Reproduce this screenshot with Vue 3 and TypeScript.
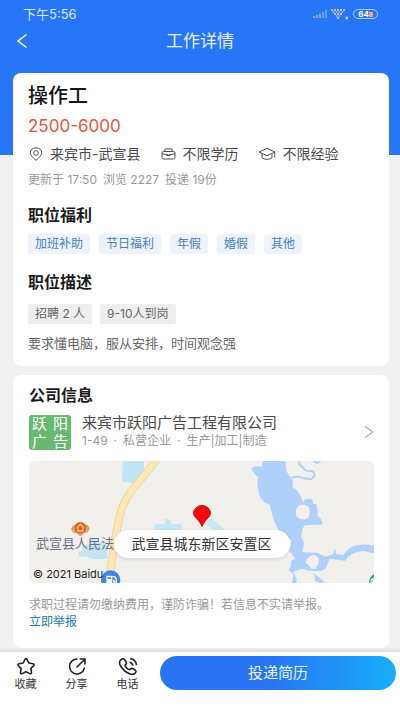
<script setup lang="ts">
interface Action {
  label: string
  paths: string[]
}

const benefits: string[] = ['加班补助', '节日福利', '年假', '婚假', '其他']
const requirements: string[] = ['招聘 2 人', '9-10人到岗']
const logoChars: string[] = ['跃', '阳', '广', '告']
const wifiRows: number[][] = [[1, 4, 7, 10, 13], [2.5, 5.5, 8.5, 11.5], [4, 7, 10], [5.5, 8.5], [7]]

const actions: Action[] = [
  {
    label: '收藏',
    paths: [
      'M8.9 2.6Q10 .7 11.1 2.6L12.8 6L16.9 6.7Q19 7.1 17.6 8.7L14.9 11.4L15.5 15.3Q15.7 17.4 13.8 16.6L10 14.8L6.2 16.6Q4.3 17.4 4.5 15.3L5.1 11.4L2.4 8.7Q1 7.1 3.1 6.7L7.2 6Z',
    ],
  },
  {
    label: '分享',
    paths: ['M10.5 2A7.5 7.5 0 1 0 17.5 10.5', 'M9.5 10.5L17.8 2.2', 'M12.6 2H18V7.4'],
  },
  {
    label: '电话',
    paths: [
      'M3 2.7Q5 .8 6.7 2.8L8.2 5Q9 6.5 7.5 7.8Q6.8 8.6 7.4 9.5Q8.5 11.3 10.5 12.4Q11.4 12.9 12.2 12.1Q13.4 10.8 15 11.7L17.2 13.2Q18.8 14.5 17.2 16.2Q15 18.3 11.5 16.8Q4.8 13.8 1.9 7.6Q.8 4.6 3 2.7Z',
      'M11.6 5.2Q14.4 5.8 14.8 8.7',
      'M12.2 1.5Q17.8 2.5 18.6 8.2',
    ],
  },
]
</script>

<template>
  <div class="page">
    <div class="status">
      <span>下午5:56</span>
      <div class="status-icons">
        <svg class="signal" viewBox="0 0 14 8" aria-hidden="true">
          <path d="M0 6h2v2H0zM3 5h2v3H3zM6 3.5h2V8H6z" fill="#8fa6b4" />
          <path d="M9 2h2v6H9zM12 0h2v8h-2z" fill="#6e9df0" />
        </svg>
        <svg class="wifi" viewBox="0 0 18 11" aria-hidden="true">
          <template v-for="(row, r) in wifiRows" :key="r">
            <circle v-for="x in row" :key="x" :cx="x" :cy="1 + r * 2" r="1" :fill="r % 2 ? '#d39bd0' : '#d5e6ff'" />
          </template>
          <circle cx="15.8" cy="9" r="1.4" fill="#b7dcff" />
        </svg>
        <span class="battery">64<i class="bolt"></i></span>
      </div>
    </div>

    <header class="header">
      <button class="back" type="button" aria-label="返回">
        <svg viewBox="0 0 12 16" aria-hidden="true"><path d="M10.5 1.5L2 8l8.500 6.500" /></svg>
      </button>
      <h1>工作详情</h1>
    </header>

    <main class="content">
      <section class="card job">
        <h2 class="job-title">操作工</h2>
        <p class="salary">2500-6000</p>
        <ul class="meta">
          <li>
            <svg viewBox="0 0 16 16" aria-hidden="true">
              <path d="M8 14.300C4.500 11.500 2.300 9.200 2.300 6.700C2.300 3.700 4.900 1.800 8 1.800S13.700 3.700 13.700 6.700C13.700 9.200 11.500 11.500 8 14.300Z" />
              <circle cx="8" cy="7" r="2.300" />
            </svg>
            来宾市-武宣县
          </li>
          <li>
            <svg viewBox="0 0 16 16" aria-hidden="true">
              <path d="M4.800 5.500V4Q4.800 2.800 6 2.800H11Q12.200 2.800 12.200 4V5.500M3.500 5.500H13.500Q15 5.500 15 7V11.500Q15 13 13.500 13H3.500Q2 13 2 11.500V7Q2 5.500 3.500 5.500ZM2 7.800Q8.500 10 15 7.800M6.500 9.500H10.500" />
            </svg>
            不限学历
          </li>
          <li>
            <svg class="cap" viewBox="0 0 18 16" aria-hidden="true">
              <path d="M1 6L9 2.300L17 6L9 9.700ZM4 7.500V11.800Q9 15 14 11.800V7.500M16.700 6.300V11.500" />
            </svg>
            不限经验
          </li>
        </ul>
        <p class="updated">更新于 17:50&ensp;浏览 2227&ensp;投递 19份</p>

        <h3 class="welfare-title">职位福利</h3>
        <ul class="tags benefits">
          <li v-for="item in benefits" :key="item">{{ item }}</li>
        </ul>

        <h3 class="desc-title">职位描述</h3>
        <ul class="tags requirements">
          <li v-for="item in requirements" :key="item">{{ item }}</li>
        </ul>
        <p class="desc">要求懂电脑，服从安排，时间观念强</p>
      </section>

      <section class="card company">
        <h3>公司信息</h3>
        <a class="company-row" href="#company">
          <span class="logo"><span v-for="c in logoChars" :key="c">{{ c }}</span></span>
          <span class="company-text">
            <span class="company-name">来宾市跃阳广告工程有限公司</span>
            <span class="company-sub">1-49&ensp;·&ensp;私营企业&ensp;·&ensp;生产|加工|制造</span>
          </span>
          <svg class="chevron" viewBox="0 0 10 14" aria-hidden="true"><path d="M1 1.500L9 7L1 12.500" /></svg>
        </a>

        <div class="map">
          <svg class="map-art" viewBox="0 0 345 122" preserveAspectRatio="xMidYMid slice" aria-hidden="true">
            <rect width="345" height="122" fill="#f1f0ed" />
            <g transform="translate(-9 -6) scale(.3333)">
              <path d="M308 15H372V42L345 85L306 80Z" fill="#bfe4f4" />
              <path d="M404 208L432 206L436 192L452 194L455 208L484 207L486 222L460 232H404Z" fill="#c3e7f3" />
              <path d="M176 290L188 288L186 270L210 268L208 255L228 250L232 262L262 260V312H220L195 304L176 306Z" fill="#c3e5f3" />
              <path d="M550 205L575 190L615 225L600 235Z" fill="#c9e8f1" />
              <path d="M418 0C385 55 320 110 304 165C296 195 284 255 276 315L266 400" fill="none" stroke="#ead6a0" stroke-width="24" />
              <path d="M418 0C385 55 320 110 304 165C296 195 284 255 276 315L266 400" fill="none" stroke="#fbe8b3" stroke-width="18" />
              <path d="M153 222Q158 208 170 208Q181 192 194 208Q207 208 209 222Q202 235 193 235Q181 251 170 235Q158 235 153 222Z" fill="#d9a55c" />
              <circle cx="181" cy="218" r="17" fill="#df5b36" />
              <path d="M170 220L181 207L192 220M174 221V228H188V221" fill="none" stroke="#f7ce72" stroke-width="4" />
              <circle cx="272" cy="375" r="29" fill="#4284e8" />
              <path d="M259 362H277V388H259Z" fill="#fff" />
              <path d="M263 367H273V372H263Z" fill="#4284e8" />
              <path d="M277 365H284L289 372V381H282V374" fill="none" stroke="#fff" stroke-width="4" />
            </g>
            <g transform="translate(171 -6) scale(.3333)">
              <path d="M190 15L185 35Q158 31 155 42Q160 57 175 65Q168 88 178 120Q184 140 210 150Q217 191 235 225Q257 247 274 255Q276 270 268 285L285 311L273 318V332L310 342Q325 350 352 348Q378 350 383 326L389 311L436 317Q450 291 490 288L530 296V274Q490 262 455 275Q437 286 431 300L409 298L404 278L400 298L375 305L350 293L306 292Q318 265 304 246Q305 220 315 211L365 209Q373 201 352 181Q355 165 348 147L340 147L337 133L316 132L309 143Q300 108 278 97Q281 78 273 68Q255 55 257 15Z" fill="#aed0fa" />
              <path d="M290 160Q298 147 310 149Q330 150 329 170Q330 190 316 193Q300 196 289 184Q286 172 290 160Z" fill="#f1f0ed" />
              <path d="M322 309Q344 291 356 309Q360 330 344 342Q329 343 327 331L317 323Z" fill="#f1f0ed" />
              <path d="M275 326L266 346L280 357L276 388H289L290 371L280 351L318 337ZM330 348Q350 362 343 376L362 386Q374 375 388 390" fill="#aed0fa" />
              <path d="M276 69Q292 61 311 70L333 73Q351 62 338 49L318 47L298 27V15M341 17Q351 29 361 18" fill="none" stroke="#aed0fa" stroke-width="6" />
              <path d="M507 390Q505 362 530 354V390Z" fill="#20a568" />
              <path d="M512 378L524 366" stroke="#fff" stroke-width="4" />
            </g>
          </svg>
          <span class="map-label">武宣县人民法</span>
          <span class="map-copy">© 2021 Baidu</span>
          <svg class="pin" viewBox="0 0 18 22" aria-hidden="true">
            <path d="M9 21.500Q7.500 17.500 3.500 13.500Q.5 10.500 .5 8.500A8.500 8 0 0 1 17.500 8.500Q17.500 10.500 14.500 13.500Q10.500 17.500 9 21.500Z" fill="#fb0505" stroke="#bd1717" />
          </svg>
          <span class="bubble">武宣县城东新区安置区</span>
        </div>

        <p class="warning">求职过程请勿缴纳费用，谨防诈骗！若信息不实请举报。</p>
        <a class="report" href="#report">立即举报</a>
      </section>
    </main>

    <footer class="bar">
      <button v-for="action in actions" :key="action.label" class="action" type="button">
        <svg viewBox="0 0 20 18" aria-hidden="true">
          <path v-for="d in action.paths" :key="d" :d="d" />
        </svg>
        <span>{{ action.label }}</span>
      </button>
      <button class="apply" type="button">投递简历</button>
    </footer>
  </div>
</template>

<style>
body {
  margin: 0;
}
</style>

<style scoped>
.page {
  display: flex;
  flex-direction: column;
  min-height: 100vh;
  background: linear-gradient(#2876f8 155px, #f1f1f1 155px);
  font-family: Inter, "Noto Sans CJK SC", sans-serif;
  color: #4a4a4a;
}
h1, h2, h3, p, ul {
  margin: 0;
  padding: 0;
}
ul {
  list-style: none;
}
button {
  border: 0;
  padding: 0;
  background: none;
  font-family: inherit;
  cursor: pointer;
}
a {
  color: inherit;
  text-decoration: none;
}
.status {
  display: flex;
  align-items: center;
  justify-content: space-between;
  height: 28px;
  padding: 0 22px 0 23px;
  font-size: 13px;
  line-height: 18px;
  color: #d9e8ff;
}
.status-icons {
  display: flex;
  align-items: center;
  gap: 4px;
}
.signal {
  width: 14px;
  height: 8px;
}
.wifi {
  width: 18px;
  height: 11px;
}
.battery {
  display: flex;
  align-items: center;
  justify-content: center;
  box-sizing: border-box;
  width: 25px;
  height: 10px;
  border: 1px solid #a9d0ff;
  border-radius: 5px;
  font-size: 8px;
  font-weight: 700;
  line-height: 8px;
  color: #fff;
}
.bolt {
  width: 4px;
  height: 5px;
  background: #f0a07c;
}
.header {
  display: grid;
  grid-template-columns: 40px 1fr 40px;
  align-items: center;
  height: 26px;
}
.back {
  display: flex;
  align-items: center;
  height: 26px;
  padding-left: 16px;
}
.back svg {
  width: 12px;
  height: 16px;
  fill: none;
  stroke: #fff;
  stroke-width: 1.5;
}
.header h1 {
  font-size: 17px;
  font-weight: 400;
  line-height: 26px;
  text-align: center;
  color: #e6efff;
}
.content {
  display: flex;
  flex-direction: column;
  gap: 9px;
  padding: 19px 11px 4px 13px;
}
.card {
  border-radius: 8px;
  background: #fff;
}
.job {
  padding: 11px 15px 14px;
}
.job-title {
  font-size: 20px;
  font-weight: 500;
  line-height: 24px;
  color: #151515;
}
.salary {
  margin-top: 6px;
  font-size: 17px;
  line-height: 24px;
  color: #e05743;
}
.meta {
  display: flex;
  flex-wrap: wrap;
  gap: 4px 20px;
  margin-top: 6px;
  font-size: 14px;
  line-height: 20px;
}
.meta li {
  display: flex;
  align-items: center;
  gap: 6px;
}
.meta svg {
  width: 16px;
  height: 16px;
  fill: none;
  stroke: #505050;
  stroke-width: 1;
}
.meta .cap {
  width: 18px;
}
.updated {
  margin-top: 8px;
  font-size: 12px;
  line-height: 16px;
  color: #999;
}
h3 {
  font-size: 16px;
  font-weight: 700;
  line-height: 20px;
  color: #1c1c1c;
}
.welfare-title {
  margin-top: 17px;
}
.desc-title {
  margin-top: 18px;
}
.tags {
  display: flex;
  flex-wrap: wrap;
  font-size: 12px;
  line-height: 20px;
}
.tags li {
  padding: 0 7px;
  border-radius: 3px;
}
.benefits {
  gap: 9px;
  margin-top: 9px;
}
.benefits li {
  background: #edf2fc;
  color: #4581b8;
}
.requirements {
  gap: 8px;
  margin-top: 12px;
}
.requirements li {
  background: #eee;
  color: #666;
}
.desc {
  margin-top: 10px;
  font-size: 13px;
  line-height: 18px;
  color: #666;
}
.company {
  display: flex;
  flex-direction: column;
  padding: 10px 15px 18px 16px;
}
.company-row {
  display: flex;
  align-items: flex-start;
  gap: 11px;
  margin-top: 8px;
}
.logo {
  display: grid;
  grid-template-columns: 1fr 1fr;
  column-gap: 6px;
  box-sizing: border-box;
  width: 42px;
  height: 35px;
  margin-top: 2px;
  padding: 0 3px;
  border-radius: 3px;
  background: #68b971;
  font-size: 15px;
  line-height: 17px;
  color: #fff;
}
.logo span {
  height: 17px;
  overflow: hidden;
}
.company-text {
  display: flex;
  flex: 1;
  flex-direction: column;
}
.company-name {
  font-size: 15px;
  line-height: 20px;
}
.company-sub {
  font-size: 12px;
  line-height: 16px;
  color: #999;
}
.chevron {
  align-self: center;
  width: 10px;
  height: 14px;
  fill: none;
  stroke: #aaa;
  stroke-width: 1.3;
}
.map {
  position: relative;
  height: 122px;
  margin-top: 11px;
  border-radius: 6px;
  overflow: hidden;
}
.map-art {
  display: block;
  width: 100%;
  height: 100%;
}
.map-label {
  position: absolute;
  left: 7px;
  top: 73px;
  font-size: 13px;
  line-height: 18px;
  color: #6b7080;
}
.map-copy {
  position: absolute;
  left: 4px;
  top: 105px;
  font-size: 11px;
  line-height: 16px;
  color: #222;
}
.pin {
  position: absolute;
  left: 50%;
  top: 44px;
  width: 18px;
  height: 22px;
  transform: translateX(-50%);
}
.bubble {
  position: absolute;
  left: 50%;
  top: 69px;
  padding: 0 18px;
  border-radius: 14px;
  background: #fff;
  box-shadow: 0 1px 4px #00000022;
  font-size: 14px;
  line-height: 28px;
  white-space: nowrap;
  color: #333;
  transform: translateX(-50%);
}
.warning {
  margin-top: 13px;
  font-size: 12px;
  line-height: 17px;
  color: #999;
}
.report {
  align-self: flex-start;
  font-size: 12px;
  line-height: 17px;
  color: #2478b5;
}
.bar {
  display: flex;
  align-items: flex-start;
  box-sizing: border-box;
  min-height: 59px;
  margin-top: auto;
  padding: 4px 4px 0 0;
  background: #fff;
  box-shadow: 0 -1px 4px #00000026;
}
.action {
  display: flex;
  flex-direction: column;
  align-items: center;
  gap: 1px;
  width: 51px;
  padding-top: 1px;
  font-size: 11px;
  line-height: 16px;
  color: #333;
}
.action svg {
  width: 20px;
  height: 18px;
  fill: none;
  stroke: #222;
  stroke-width: 1.6;
  stroke-linejoin: round;
}
.apply {
  flex: 1;
  margin-left: 7px;
  border-radius: 17px;
  background: linear-gradient(90deg, #2874f3 45%, #18adfb);
  font-size: 15px;
  line-height: 34px;
  color: #e9f3ff;
}
</style>
